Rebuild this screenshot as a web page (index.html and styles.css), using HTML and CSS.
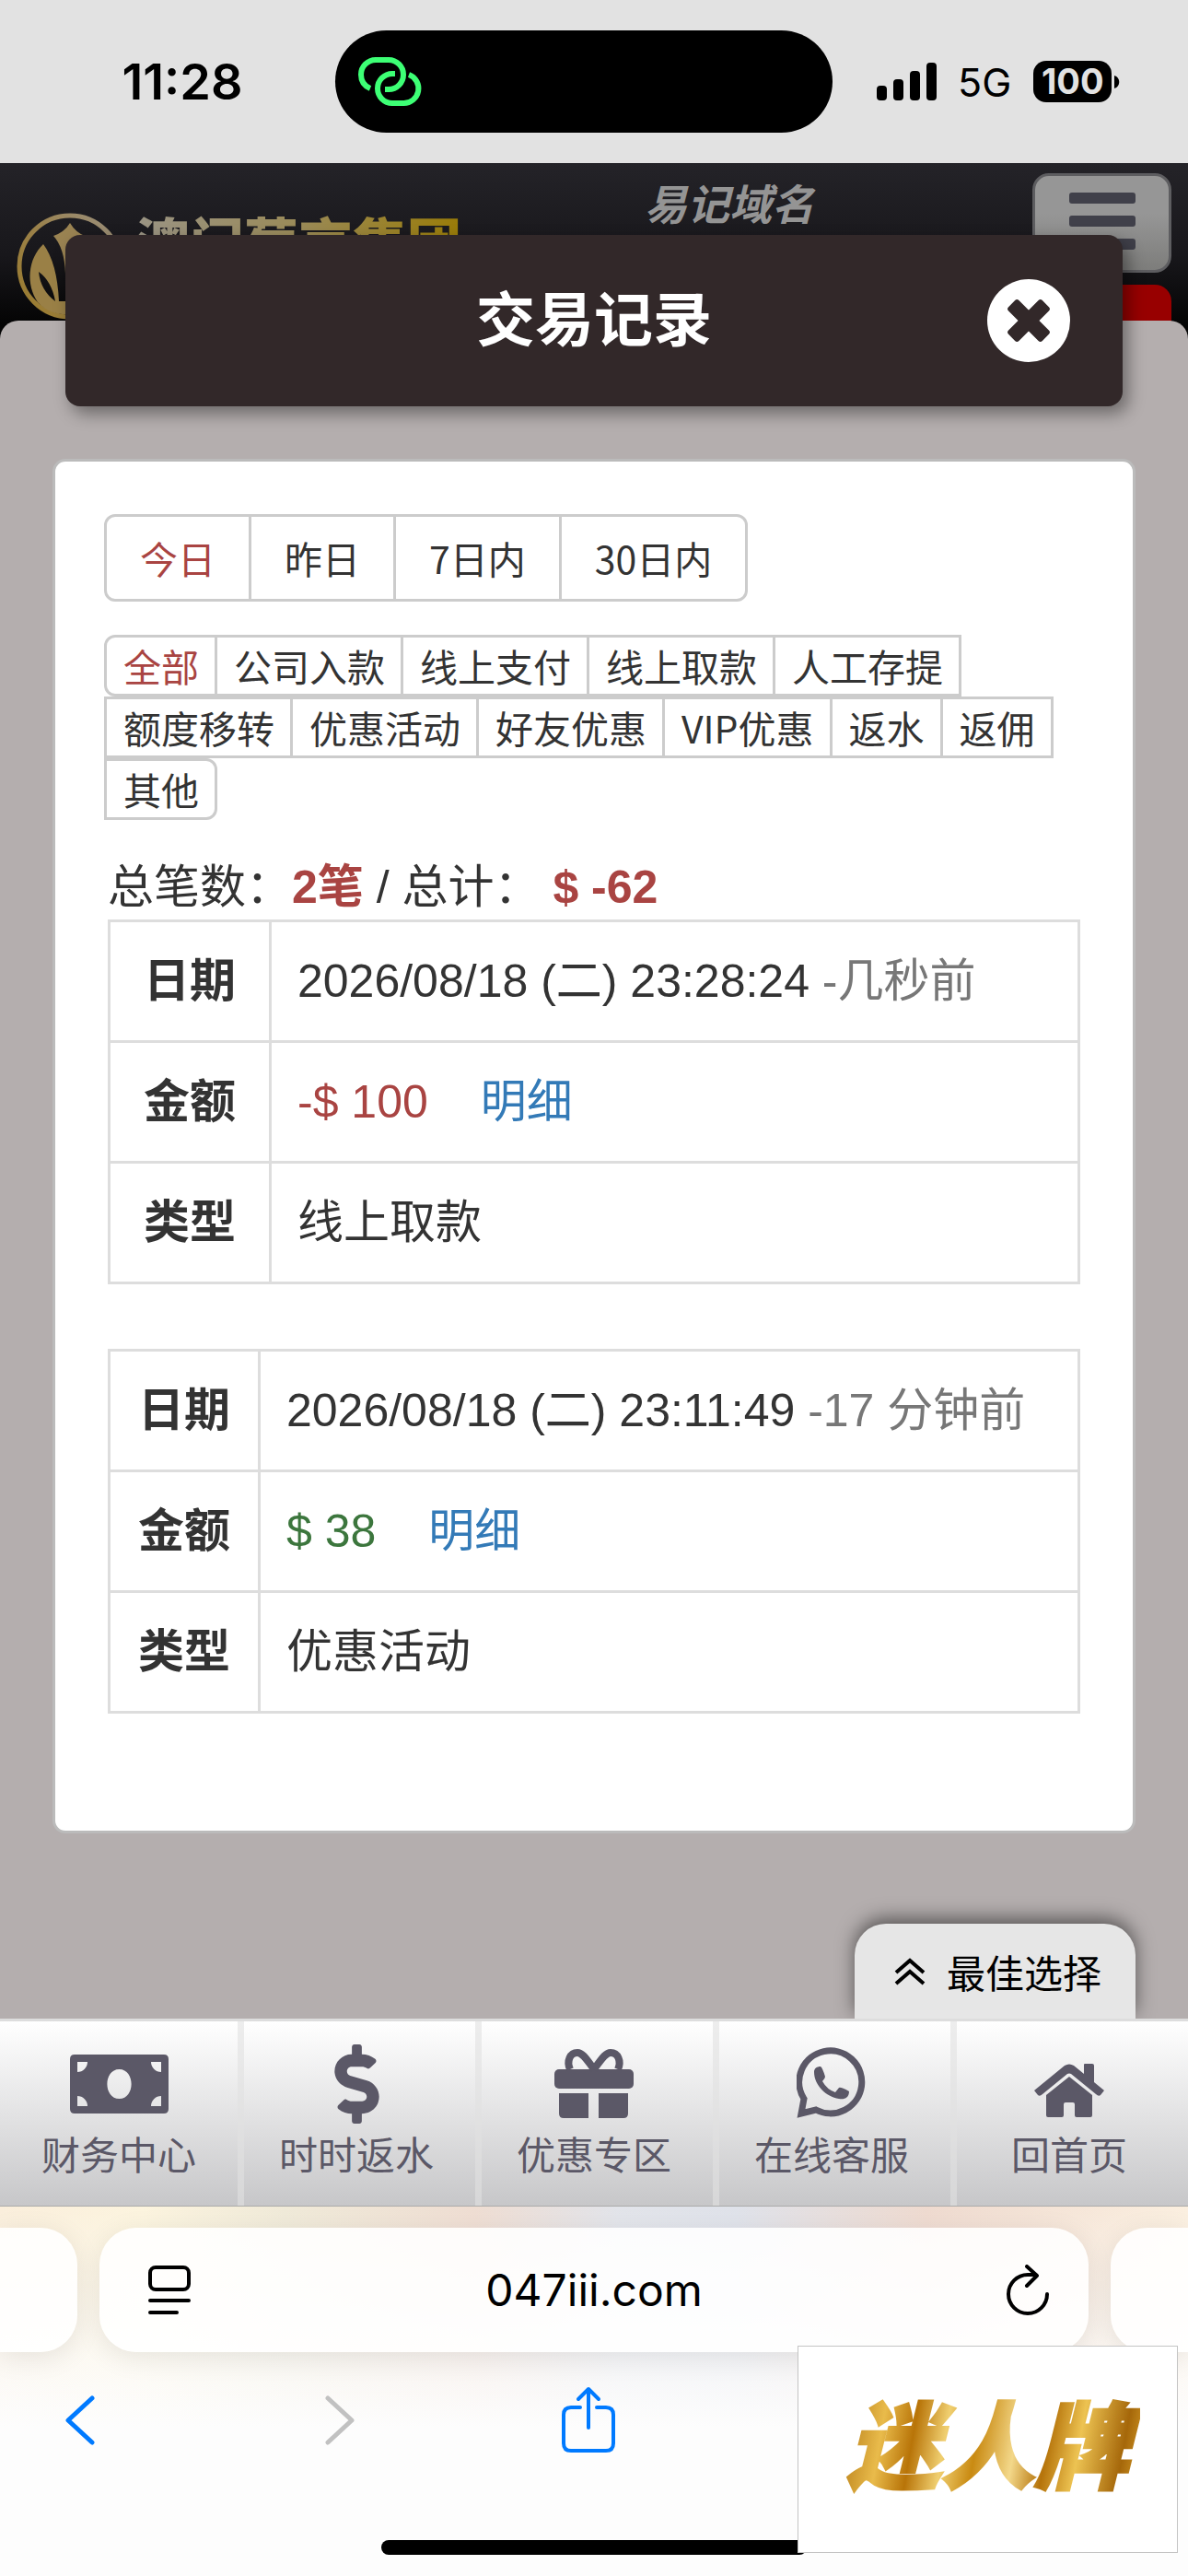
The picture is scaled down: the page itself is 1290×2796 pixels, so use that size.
FILE: index.html
```html
<!DOCTYPE html>
<html lang="zh-CN">
<head>
<meta charset="utf-8">
<meta name="viewport" content="width=device-width, initial-scale=1">
<title>交易记录</title>
<link rel="stylesheet" href="styles.css">
</head>
<body>
<div class="status">
  <time class="status-time">11:28</time>
  <div class="island">
    <svg width="90" height="80" viewBox="0 0 90 80" fill="none" stroke="#3dff75" stroke-width="6">
      <path d="M22 46C15 43 12 37 12 31A16 16 0 0 1 28 15H42A16 16 0 0 1 42 47H38"/>
      <path d="M49 30H46A16 16 0 0 0 46 62H58A16 16 0 0 0 64 31"/>
    </svg>
  </div>
  <div class="status-right">
    <svg width="66" height="42" viewBox="0 0 66 42"><rect y="25" width="11" height="16" rx="4"/><rect x="18" y="18" width="11" height="23" rx="4"/><rect x="36" y="9" width="11" height="32" rx="4"/><rect x="54" width="11" height="41" rx="4"/></svg>
    <span class="network">5G</span>
    <span class="battery">100</span>
    <svg class="battery-cap" width="6" height="14" viewBox="0 0 6 14"><path d="M0 0C7 2 7 12 0 14Z"/></svg>
  </div>
</div>

<header class="site-header">
  <a class="brand" href="#">
    <svg width="116" height="116" viewBox="0 0 116 116">
      <defs><linearGradient id="ring" x1="0" y1="1" x2="1" y2="0"><stop offset="0" stop-color="#9a7b2c"/><stop offset=".5" stop-color="#9a8048"/><stop offset="1" stop-color="#9a9080"/></linearGradient></defs>
      <circle cx="58" cy="58" r="55" fill="none" stroke="url(#ring)" stroke-width="5"/>
      <path d="M58 11Q64 21 74 25Q64 38 63 66H53Q52 38 40 25Q52 21 58 11Z" fill="#9a8352"/>
      <path d="M29 34C12 50 10 78 23 97C33 108 46 111 58 110V96H46Q44 54 29 34ZM24 64Q38 74 42 96Q26 84 24 64Z" fill="#9a8046" fill-rule="evenodd"/>
    </svg>
    <span class="brand-name">澳门葡京集团</span>
  </a>
  <a class="domain" href="#">易记域名</a>
  <div class="header-actions">
    <button class="menu" type="button" aria-label="菜单"><i></i><i></i><i></i></button>
    <div class="red-tab"></div>
  </div>
</header>

<main class="sheet">
  <div class="modal-bar">
    <h1>交易记录</h1>
    <button class="close" type="button" aria-label="关闭">
      <svg width="90" height="90" viewBox="0 0 90 90"><circle cx="45" cy="45" r="45" fill="#fff"/><g fill="#322829" transform="rotate(45 45 45)"><rect x="19" y="37" width="52" height="16" rx="3"/><rect x="37" y="19" width="16" height="52" rx="3"/></g></svg>
    </button>
  </div>

  <section class="card">
    <div class="segments dates">
      <button class="active" type="button">今日</button><button type="button">昨日</button><button type="button">7日内</button><button type="button">30日内</button>
    </div>
    <div class="segments kinds">
      <button class="active" type="button">全部</button><button type="button">公司入款</button><button type="button">线上支付</button><button type="button">线上取款</button><button type="button">人工存提</button><button type="button">额度移转</button><button type="button">优惠活动</button><button type="button">好友优惠</button><button type="button">VIP优惠</button><button type="button">返水</button><button type="button">返佣</button><button type="button">其他</button>
    </div>
    <p class="summary">总笔数：<b>2笔</b> / 总计： <b>$ -62</b></p>
    <table class="record">
      <tr><th scope="row">日期</th><td>2026/08/18 (二) 23:28:24 <span class="ago">-几秒前</span></td></tr>
      <tr><th scope="row">金额</th><td><span class="minus">-$ 100</span> <a href="#">明细</a></td></tr>
      <tr><th scope="row">类型</th><td>线上取款</td></tr>
    </table>
    <table class="record narrow">
      <tr><th scope="row">日期</th><td>2026/08/18 (二) 23:11:49 <span class="ago">-17 分钟前</span></td></tr>
      <tr><th scope="row">金额</th><td><span class="plus">$ 38</span> <a href="#">明细</a></td></tr>
      <tr><th scope="row">类型</th><td>优惠活动</td></tr>
    </table>
  </section>

  <button class="best" type="button">
    <svg width="34" height="32" viewBox="0 0 34 32" fill="none" stroke="#000" stroke-width="4"><path d="M2 17L17 4L32 17M2 29L17 16L32 29"/></svg>
    最佳选择
  </button>
</main>

<nav class="tabs">
  <a href="#">
    <svg width="107" height="86" viewBox="0 0 107 86"><path fill-rule="evenodd" d="M5 11H102Q107 11 107 16V70Q107 75 102 75H5Q0 75 0 70V16Q0 11 5 11ZM8 19V30A11 11 0 0 0 19 19ZM88 19A11 11 0 0 0 99 30V19ZM8 67H19A11 11 0 0 0 8 56ZM99 67V56A11 11 0 0 0 88 67ZM53.500 27C36 27 36 59 53.500 59C71 59 71 27 53.500 27Z"/></svg>
    <span>财务中心</span>
  </a>
  <a href="#">
    <svg width="49" height="86" viewBox="0 0 288 512"><path d="M209.200 233.400l-108-31.600C88.700 198.200 80 186.500 80 173.500c0-16.300 13.200-29.500 29.500-29.500h66.300c12.200 0 24.200 3.700 34.200 10.500 6.100 4.100 14.300 3.100 19.500-2l34.800-34c7.100-6.900 6.100-18.400-1.800-24.500C238 74.800 207.400 64.100 176 64V16c0-8.800-7.200-16-16-16h-32c-8.800 0-16 7.200-16 16v48h-2.500C45.800 64-5.400 118.700.5 183.600c4.200 46.100 39.400 83.600 83.800 96.600l102.500 30c12.500 3.700 21.200 15.300 21.200 28.300 0 16.300-13.200 29.500-29.500 29.500h-66.300C100 368 88 364.300 78 357.500c-6.100-4.100-14.300-3.100-19.500 2l-34.800 34c-7.100 6.900-6.100 18.400 1.800 24.500 24.500 19.200 55.100 29.900 86.500 30v48c0 8.800 7.200 16 16 16h32c8.800 0 16-7.200 16-16v-48.200c46.600-.9 90.300-28.600 105.700-72.700 21.500-61.600-14.600-124.800-72.500-141.700z"/></svg>
    <span>时时返水</span>
  </a>
  <a href="#">
    <svg width="86" height="86" viewBox="0 0 86 86"><rect y="27" width="86" height="21" rx="5"/><path d="M5 53H37V80H10Q5 80 5 75ZM48 53H80V75Q80 80 75 80H48Z"/><path d="M43 27C36 18 31 9 25 9C17 9 13 18 17 27M43 27C50 18 55 9 61 9C69 9 73 18 69 27" fill="none" stroke="#5b5867" stroke-width="8"/></svg>
    <span>优惠专区</span>
  </a>
  <a href="#">
    <svg width="76" height="86" viewBox="0 0 76 86"><path d="M8 59A34 34 0 1 1 21 71L5 75Z" fill="none" stroke="#5b5867" stroke-width="7"/><path d="M19 30C19 26 22 24 26 24Q28 25 31 35Q31 37 28 40Q33 49 42 52L46 47Q48 46 57 51C57 58 52 60 46 59C32 57 19 44 19 30Z"/></svg>
    <span>在线客服</span>
  </a>
  <a href="#">
    <svg width="76" height="86" viewBox="0 0 76 86"><path d="M0 50L33 23Q38 20 43 23L54 32V22Q54 21 55 21H63Q65 21 65 23V41L76 50L72 55Q70 57 67 54L40 32Q38 31 36 32L9 54Q6 57 4 55Z"/><path d="M38 35L63 55V77Q63 79 61 79H46Q44 79 44 77V65Q44 63 42 63H34Q32 63 32 65V77Q32 79 30 79H15Q13 79 13 77V55Z"/></svg>
    <span>回首页</span>
  </a>
</nav>

<footer class="browser">
  <div class="pills">
    <div class="pill side-left"></div>
    <div class="pill url">
      <svg width="56" height="56" viewBox="-10 0 56 56" fill="none" stroke="#000" stroke-width="4" stroke-linecap="round"><rect x="2" y="3" width="42" height="24" rx="6"/><path d="M2 39H44M2 52H31"/></svg>
      <span>047iii.com</span>
      <button type="button" aria-label="刷新"><svg width="56" height="56" viewBox="-10 0 56 56" fill="none" stroke="#000" stroke-width="4" stroke-linecap="round" stroke-linejoin="round"><path d="M44 32A21 21 0 1 1 23 11H32M22 2L33 12L22 23"/></svg></button>
    </div>
    <div class="pill side-right"></div>
  </div>
  <div class="tools">
    <button type="button" aria-label="后退"><svg width="32" height="76" viewBox="0 0 32 76" fill="none" stroke="#007aff" stroke-width="5" stroke-linecap="round" stroke-linejoin="round"><path d="M29 14L3 38L29 62"/></svg></button>
    <button type="button" aria-label="前进"><svg width="32" height="76" viewBox="0 0 32 76" fill="none" stroke="#c1c1c1" stroke-width="5" stroke-linecap="round" stroke-linejoin="round"><path d="M3 14L29 38L3 62"/></svg></button>
    <button type="button" aria-label="分享"><svg width="58" height="76" viewBox="0 0 58 76" fill="none" stroke="#007aff" stroke-width="4" stroke-linecap="round" stroke-linejoin="round"><path d="M20 24H10Q2 24 2 32V63Q2 71 10 71H48Q56 71 56 63V32Q56 24 48 24H38M29 46V4M18 15L29 4L40 15"/></svg></button>
  </div>
  <div class="home-bar"></div>
  <div class="stamp"><span>迷人牌</span></div>
</footer>
</body>
</html>
```
FILE: styles.css
```css
* { box-sizing: border-box; }

body {
  margin: 0;
  min-height: 100vh;
  display: flex;
  flex-direction: column;
  background: #fdfdfd;
  color: #333;
  font-family: "Liberation Sans", "Noto Sans CJK SC", sans-serif;
  font-size: 50px;
  overflow-x: hidden;
}

button {
  margin: 0;
  padding: 0;
  border: 0;
  background: none;
  color: inherit;
  font: inherit;
}

a { text-decoration: none; }
svg { display: block; flex: none; }

/* phone status bar */
.status {
  display: grid;
  grid-template-columns: 364px 1fr 386px;
  align-items: center;
  height: 177px;
  background: #e2e2e2;
  color: #000;
  font-family: Inter, sans-serif;
}
.status-time {
  padding-left: 32px;
  text-align: center;
  font-size: 54px;
  font-weight: 600;
}
.island {
  height: 111px;
  padding: 17px 16px;
  border-radius: 56px;
  background: #000;
}
.status-right {
  display: flex;
  align-items: center;
  padding-left: 48px;
}
.network { margin-left: 22px; font-size: 43px; }
.battery {
  margin-left: 24px;
  width: 85px;
  border-radius: 14px;
  background: #000;
  color: #e2e2e2;
  font-size: 38px;
  font-weight: 700;
  line-height: 45px;
  text-align: center;
}
.battery-cap { margin-left: 3px; }

/* site header behind the dialog */
.site-header {
  display: flex;
  align-items: flex-start;
  height: 200px;
  padding: 11px 18px 0;
  background: linear-gradient(#242328, #18171b 50%, #040404 88%);
}
.brand {
  display: flex;
  margin-top: 43px;
  gap: 13px;
}
.brand-name {
  font-size: 59px;
  font-weight: 900;
  line-height: 70px;
  white-space: nowrap;
  color: transparent;
  background: linear-gradient(90deg, #9a9484, #9a8a58 50%, #9a7c08);
  background-clip: text;
}
.domain {
  flex: 1;
  text-align: center;
  padding-right: 38px;
  color: #949494;
  font-size: 46px;
  font-weight: 700;
  font-style: italic;
  line-height: 70px;
}
.header-actions {
  display: flex;
  flex-direction: column;
  gap: 13px;
  width: 151px;
}
.menu {
  display: flex;
  flex-direction: column;
  align-items: center;
  gap: 13px;
  height: 108px;
  padding-top: 18px;
  border: 3px solid #5d5d60;
  border-radius: 18px;
  background: linear-gradient(#969696 40%, #7d7d7b);
}
.menu i {
  width: 72px;
  height: 12px;
  border-radius: 3px;
  background: #40404a;
}
.red-tab {
  height: 64px;
  border-radius: 18px 18px 0 0;
  background: #980000;
}

/* dialog */
.sheet {
  flex: 1;
  display: flex;
  flex-direction: column;
  margin-top: -29px;
  padding: 0 57px;
  border-radius: 20px 20px 0 0;
  background: #b4aeae;
}
.modal-bar {
  display: grid;
  grid-template-columns: 1fr auto 1fr;
  align-items: center;
  height: 186px;
  margin: -93px 14px 0;
  padding: 0 57px;
  border-radius: 16px;
  background: #322829;
  box-shadow: 6px 8px 18px rgba(0, 0, 0, .4);
  color: #fff;
}
.modal-bar h1 {
  grid-column: 2;
  margin: 0;
  font-size: 64px;
  font-weight: 700;
  line-height: 90px;
}
.close { justify-self: end; }

.card {
  margin-top: 57px;
  padding: 57px 53px 127px;
  border: 3px solid #bbb;
  border-radius: 14px;
  background: #fff;
}
.segments {
  display: flex;
  flex-wrap: wrap;
  font-family: "Noto Sans CJK SC", sans-serif;
}
.segments button {
  margin-right: -3px;
  border: 3px solid #ccc;
  font-size: 41px;
  line-height: 61px;
  padding: 0 17px 0 18px;
  white-space: nowrap;
}
.segments .active { color: #a94442; }
.segments button:first-child { border-radius: 12px 0 0 12px; }
.segments button:last-child { border-radius: 0 12px 12px 0; }
.dates button { padding: 14px 36px; }
.kinds { margin-top: 36px; }
.summary {
  margin: 38px 4px 0;
  line-height: 70px;
}
.summary b { color: #a94442; }

.record {
  width: calc(100% - 8px);
  margin: 0 4px;
  border-collapse: collapse;
}
.record + .record { margin-top: 70px; }
.record th, .record td {
  height: 131px;
  padding: 0 28px;
  border: 3px solid #ddd;
  line-height: 70px;
  white-space: nowrap;
}
.record th { width: 175px; padding: 0; }
.narrow th { width: 163px; }
.record td { text-align: left; }
.record a { margin-left: 43px; color: #337ab7; }
.ago { color: #777; }
.minus { color: #a94442; }
.plus { color: #3c763d; }

.best {
  display: flex;
  align-items: center;
  align-self: flex-end;
  gap: 23px;
  height: 103px;
  margin-top: auto;
  padding: 0 37px 0 43px;
  border-radius: 34px 34px 0 0;
  background: #e6e6e6;
  box-shadow: 0 -6px 20px rgba(0, 0, 0, .5);
  color: #000;
  font-size: 42px;
}

/* site tab bar */
.tabs {
  position: relative;
  display: grid;
  grid-template-columns: repeat(5, 1fr);
  height: 204px;
  border-top: 3px solid #ddd;
  border-bottom: 1px solid #aaa;
  background: linear-gradient(#fff, #c7c7c9);
}
.tabs a {
  display: flex;
  flex-direction: column;
  align-items: center;
  padding-top: 25px;
  color: #5b5867;
  fill: #5b5867;
  font-size: 42px;
  line-height: 62px;
}
.tabs a + a { box-shadow: inset 7px 0 rgba(225, 225, 225, .6); }
.tabs span { margin-top: 5px; }

/* browser chrome */
.browser {
  position: relative;
  height: 401px;
  padding-top: 23px;
  background:
    linear-gradient(rgba(253, 253, 253, 0), #fdfdfd 240px),
    linear-gradient(90deg, #faeedb, #fcf4de 12%, #f0ead8 24%, #efddd2 40%, #e2e4ea 52%, #dfe2ea 62%, #efdacf 78%, #fbefdf);
}
.pills { display: flex; gap: 24px; }
.pill {
  height: 135px;
  border-radius: 40px;
  background: rgba(255, 255, 255, .88);
  box-shadow: 0 6px 30px rgba(0, 0, 0, .09);
}
.side-left { width: 84px; border-radius: 0 40px 40px 0; }
.side-right { width: 84px; border-radius: 40px 0 0 40px; }
.url {
  flex: 1;
  display: flex;
  align-items: center;
  justify-content: space-between;
  padding: 0 43px;
  color: #000;
  font-family: Inter, sans-serif;
  font-size: 48px;
}
.tools {
  display: grid;
  grid-template-columns: 71px 282px 257px 58px;
  margin-top: 36px;
}
.tools button { justify-self: start; }
.tools button:first-child { grid-column: 2; }
.home-bar {
  width: 462px;
  height: 16px;
  margin: 92px auto 0;
  border-radius: 8px;
  background: #000;
}
.stamp {
  position: absolute;
  right: 11px;
  bottom: 25px;
  width: 413px;
  height: 225px;
  border: 1px solid #c4c4c4;
  background: #fff;
  text-align: center;
}
.stamp span {
  padding: 0 12px;
  color: transparent;
  -webkit-text-stroke: 3px transparent;
  background: linear-gradient(100deg, #a86a08, #e9bb4b 16%, #b87408 26%, #f0cf70 36%, #c98a12 46%, #f3d88a 58%, #b5730a 68%, #edc352 78%, #a5670a 92%, #d8a02a);
  background-clip: text;
  font-size: 102px;
  font-weight: 900;
  font-style: italic;
  line-height: 223px;
}
```
